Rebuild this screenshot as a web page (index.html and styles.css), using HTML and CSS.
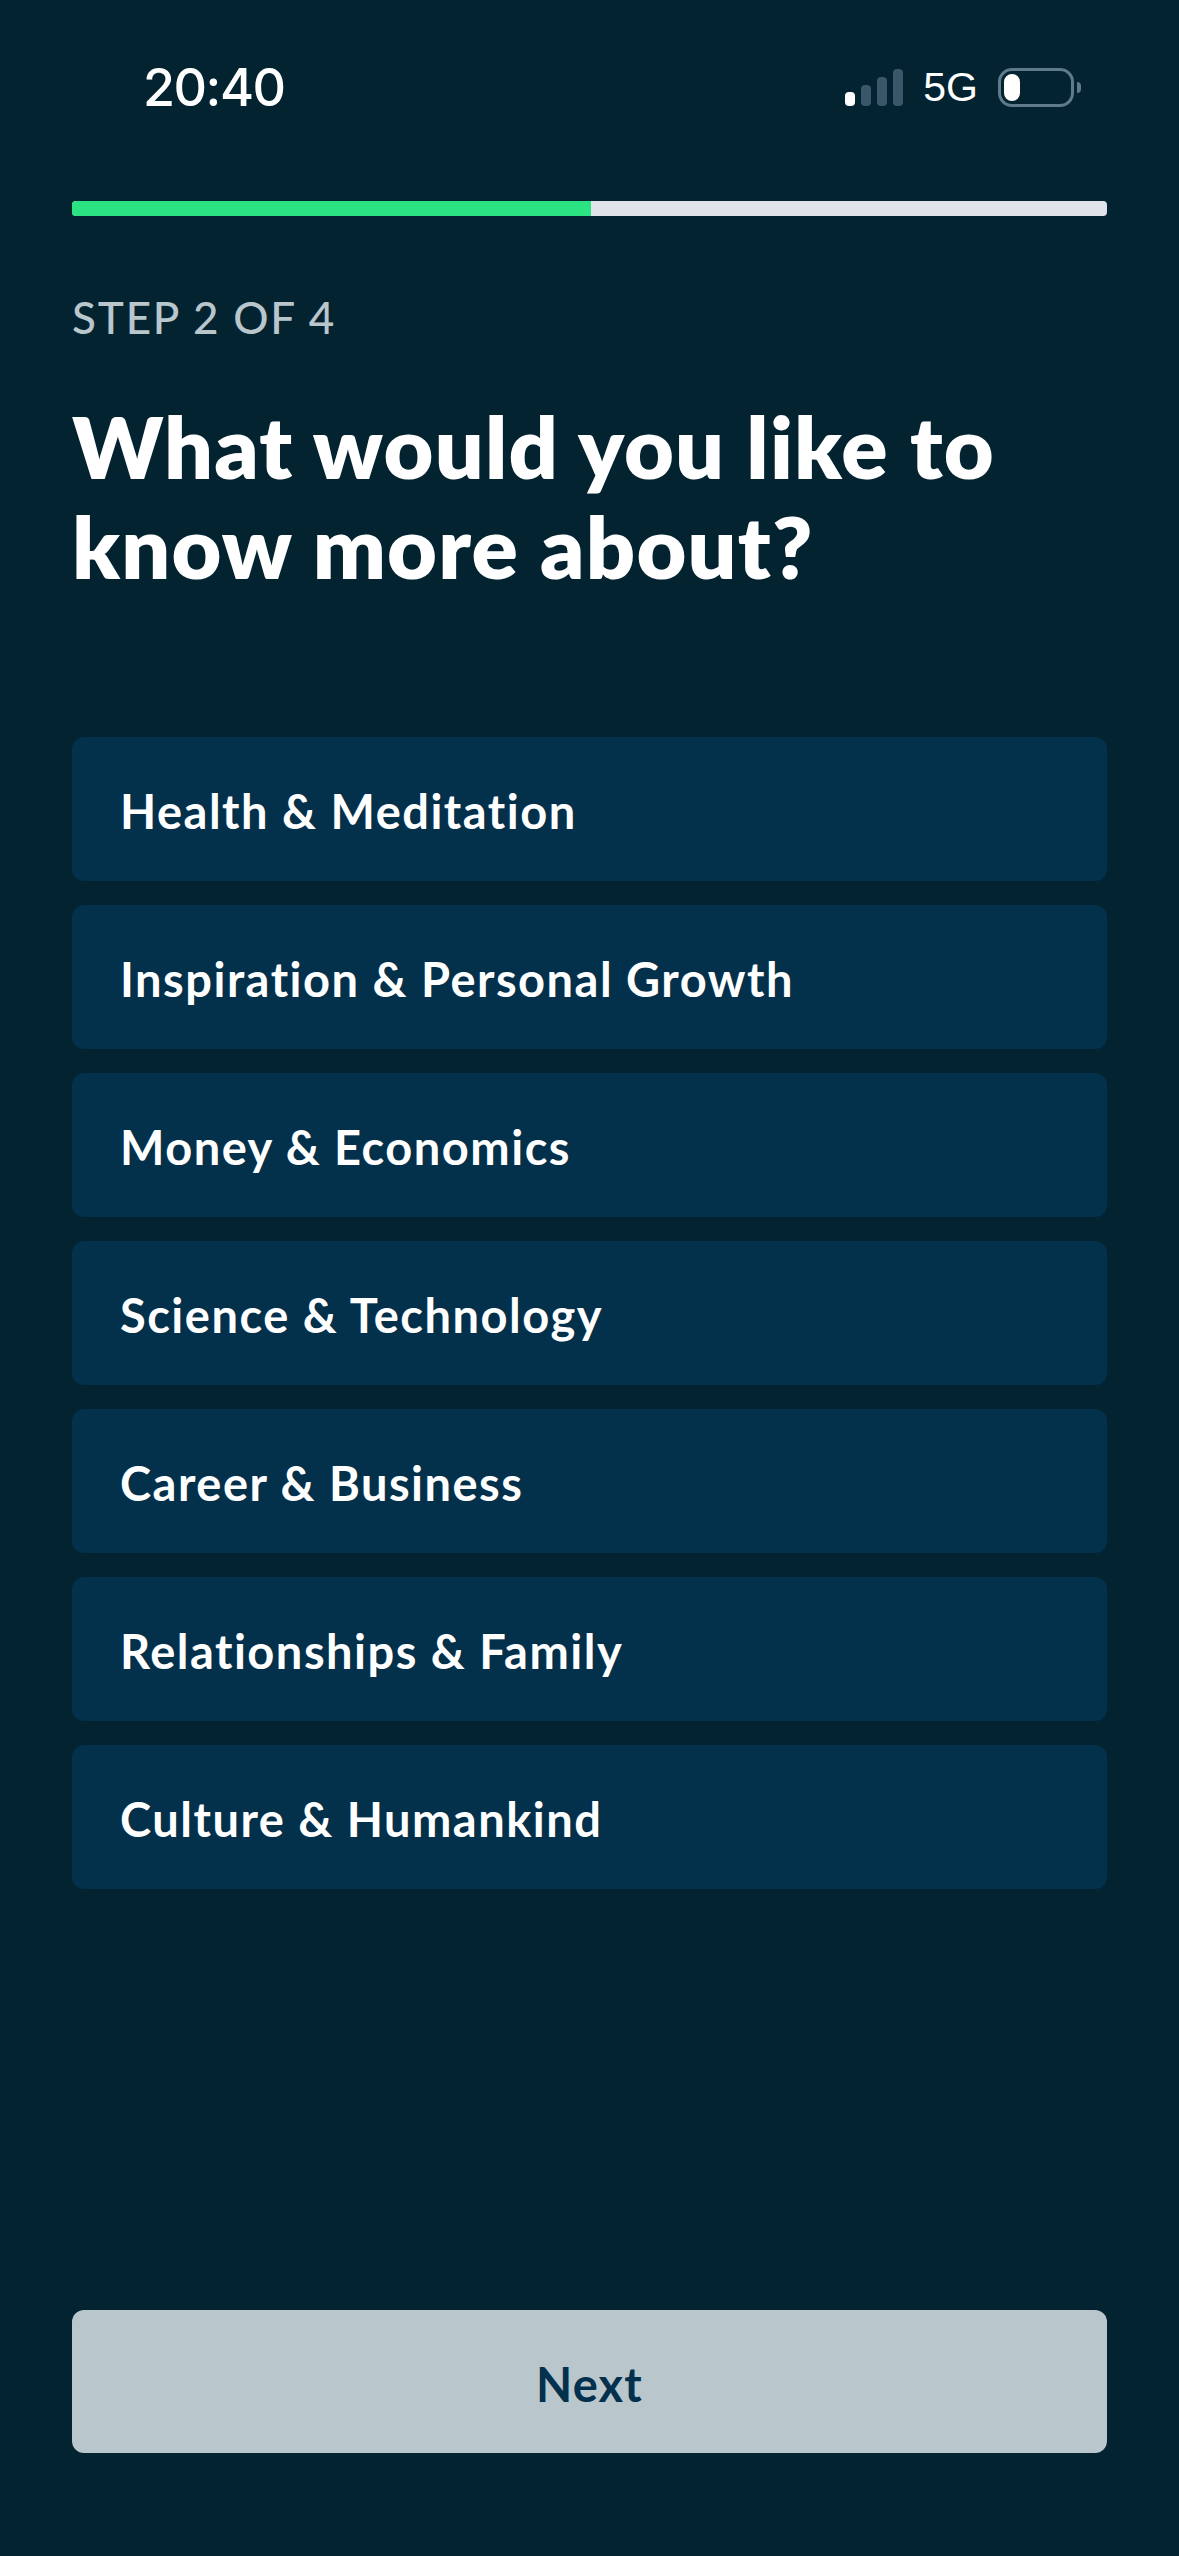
FILE: index.html
```html
<!DOCTYPE html>
<html lang="en">
<head>
    <meta charset="UTF-8">
    <meta name="viewport" content="width=device-width, initial-scale=1.0">
    <title>Onboarding</title>
    <link rel="stylesheet" href="styles.css">
</head>
<body>
    <div class="status-bar">
        <span class="time">20:40</span>
        <div class="status-icons">
            <div class="signal">
                <span class="bar bar-1"></span>
                <span class="bar bar-2"></span>
                <span class="bar bar-3"></span>
                <span class="bar bar-4"></span>
            </div>
            <span class="network">5G</span>
            <div class="battery">
                <div class="battery-body"><span class="battery-level"></span></div>
                <span class="battery-tip"></span>
            </div>
        </div>
    </div>

    <div class="progress"><div class="progress-done"></div></div>

    <p class="step">STEP 2 OF 4</p>
    <h1 class="title">What would you like to<br>know more about?</h1>

    <div class="options">
        <button class="option">Health &amp; Meditation</button>
        <button class="option">Inspiration &amp; Personal Growth</button>
        <button class="option">Money &amp; Economics</button>
        <button class="option">Science &amp; Technology</button>
        <button class="option">Career &amp; Business</button>
        <button class="option">Relationships &amp; Family</button>
        <button class="option">Culture &amp; Humankind</button>
    </div>

    <button class="next">Next</button>
</body>
</html>
```

FILE: styles.css
```css
* {
    box-sizing: border-box;
}
body {
    display: flex;
    flex-direction: column;
    width: 1179px;
    height: 2556px;
    margin: 0;
    padding: 0 72px 103px;
    overflow: hidden;
    background-color: #032331;
    font-family: "Lato", "Noto Sans", sans-serif;
    font-variant-ligatures: none;
    color: #fff;
}

/* status bar */
.status-bar {
    display: flex;
    justify-content: space-between;
    align-items: center;
    height: 201px;
    padding: 0 26px 27px 71px;
}
.time {
    font-family: "Inter", sans-serif;
    font-size: 52px;
    font-weight: 500;
    letter-spacing: -1.5px;
}
.status-icons {
    display: flex;
    align-items: center;
}
.signal {
    display: flex;
    align-items: flex-end;
    gap: 6px;
    height: 38px;
    margin-top: -1px;
}
.bar {
    width: 10px;
    border-radius: 4px;
    background-color: #3a5669;
}
.bar-1 {
    height: 14px;
    background-color: #fff;
}
.bar-2 {
    height: 21px;
}
.bar-3 {
    height: 29px;
}
.bar-4 {
    height: 37px;
}
.network {
    margin-left: 20px;
    font-family: "Liberation Sans", sans-serif;
    font-size: 41px;
}
.battery {
    display: flex;
    align-items: center;
    margin-left: 20px;
}
.battery-body {
    width: 76px;
    height: 39px;
    padding: 3px;
    border: 3px solid #5f7a8a;
    border-radius: 14px;
}
.battery-level {
    display: block;
    width: 16px;
    height: 27px;
    border-radius: 8px;
    background-color: #fff;
}
.battery-tip {
    width: 4px;
    height: 11px;
    margin-left: 3px;
    border-radius: 0 6px 6px 0;
    background-color: #5f7a8a;
}

/* progress */
.progress {
    height: 15px;
    border-radius: 4px;
    background-color: #e0e4ea;
    overflow: hidden;
}
.progress-done {
    width: 50.1%;
    height: 100%;
    background-color: #2be382;
}

.step {
    margin: 75px 0 0;
    font-size: 44px;
    font-weight: 500;
    line-height: 52px;
    letter-spacing: 1.8px;
    color: #b9c6cc;
}
.title {
    margin: 53px 0 0;
    font-size: 86px;
    font-weight: 800;
    line-height: 100px;
    letter-spacing: 1.2px;
}

.options {
    display: flex;
    flex-direction: column;
    gap: 24px;
    margin-top: 141px;
}
.option {
    height: 144px;
    padding: 4px 48px 0;
    border: none;
    border-radius: 12px;
    background-color: #03304b;
    font-family: inherit;
    font-size: 47px;
    font-weight: 700;
    letter-spacing: 1.5px;
    text-align: left;
    color: #fff;
}
.next {
    height: 143px;
    margin-top: auto;
    padding: 4px 0 0;
    border: none;
    border-radius: 12px;
    background-color: #b9c6cc;
    font-family: inherit;
    font-size: 47px;
    font-weight: 700;
    letter-spacing: 1.2px;
    color: #03314d;
}
```
